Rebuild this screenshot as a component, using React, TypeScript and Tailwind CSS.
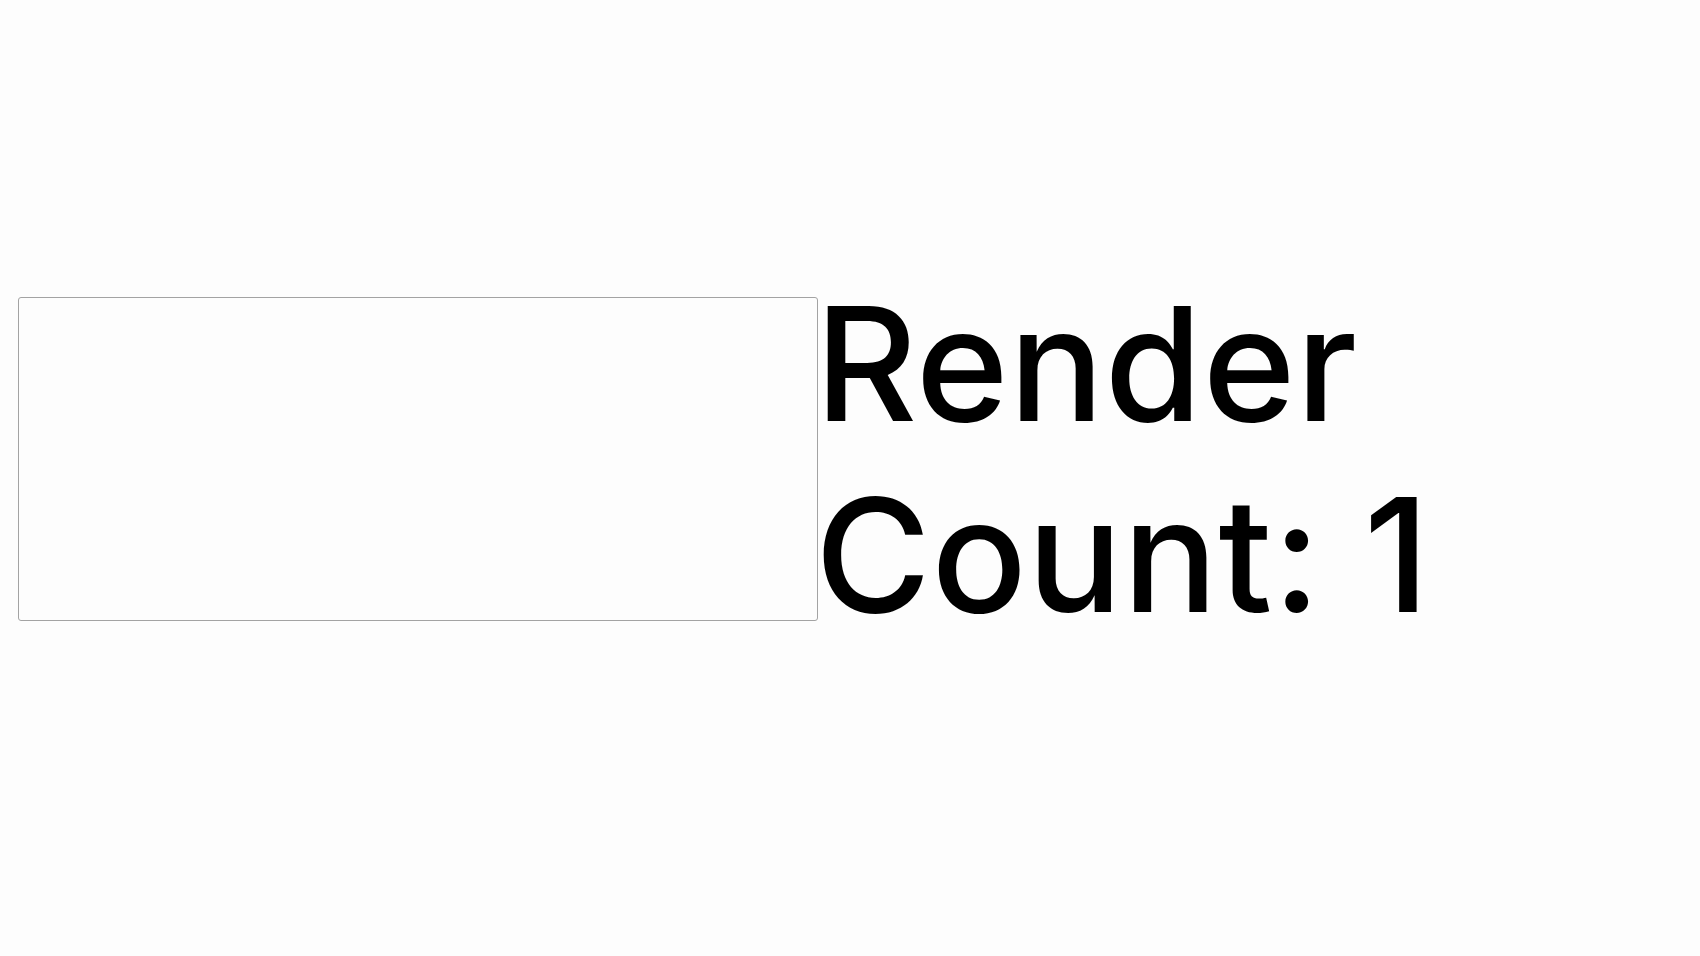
import React from "react";

export default function App() {
  return (
    <div className="w-[1700px] h-[956px] bg-[#fdfdfd] overflow-hidden" style={{ fontFamily: "Inter, 'Noto Sans', sans-serif" }}>
      <div className="flex items-center pt-[268px] pl-[18px]">
        <div className="w-[800px] h-[324px] shrink-0 border border-[#a3a3a3] rounded-[3px] bg-[#fdfdfd]" />
        <div className="ml-[-3px] text-[158px] leading-[1.21] font-medium tracking-[0.5px] text-black">Render Count: 1</div>
      </div>
    </div>
  );
}
